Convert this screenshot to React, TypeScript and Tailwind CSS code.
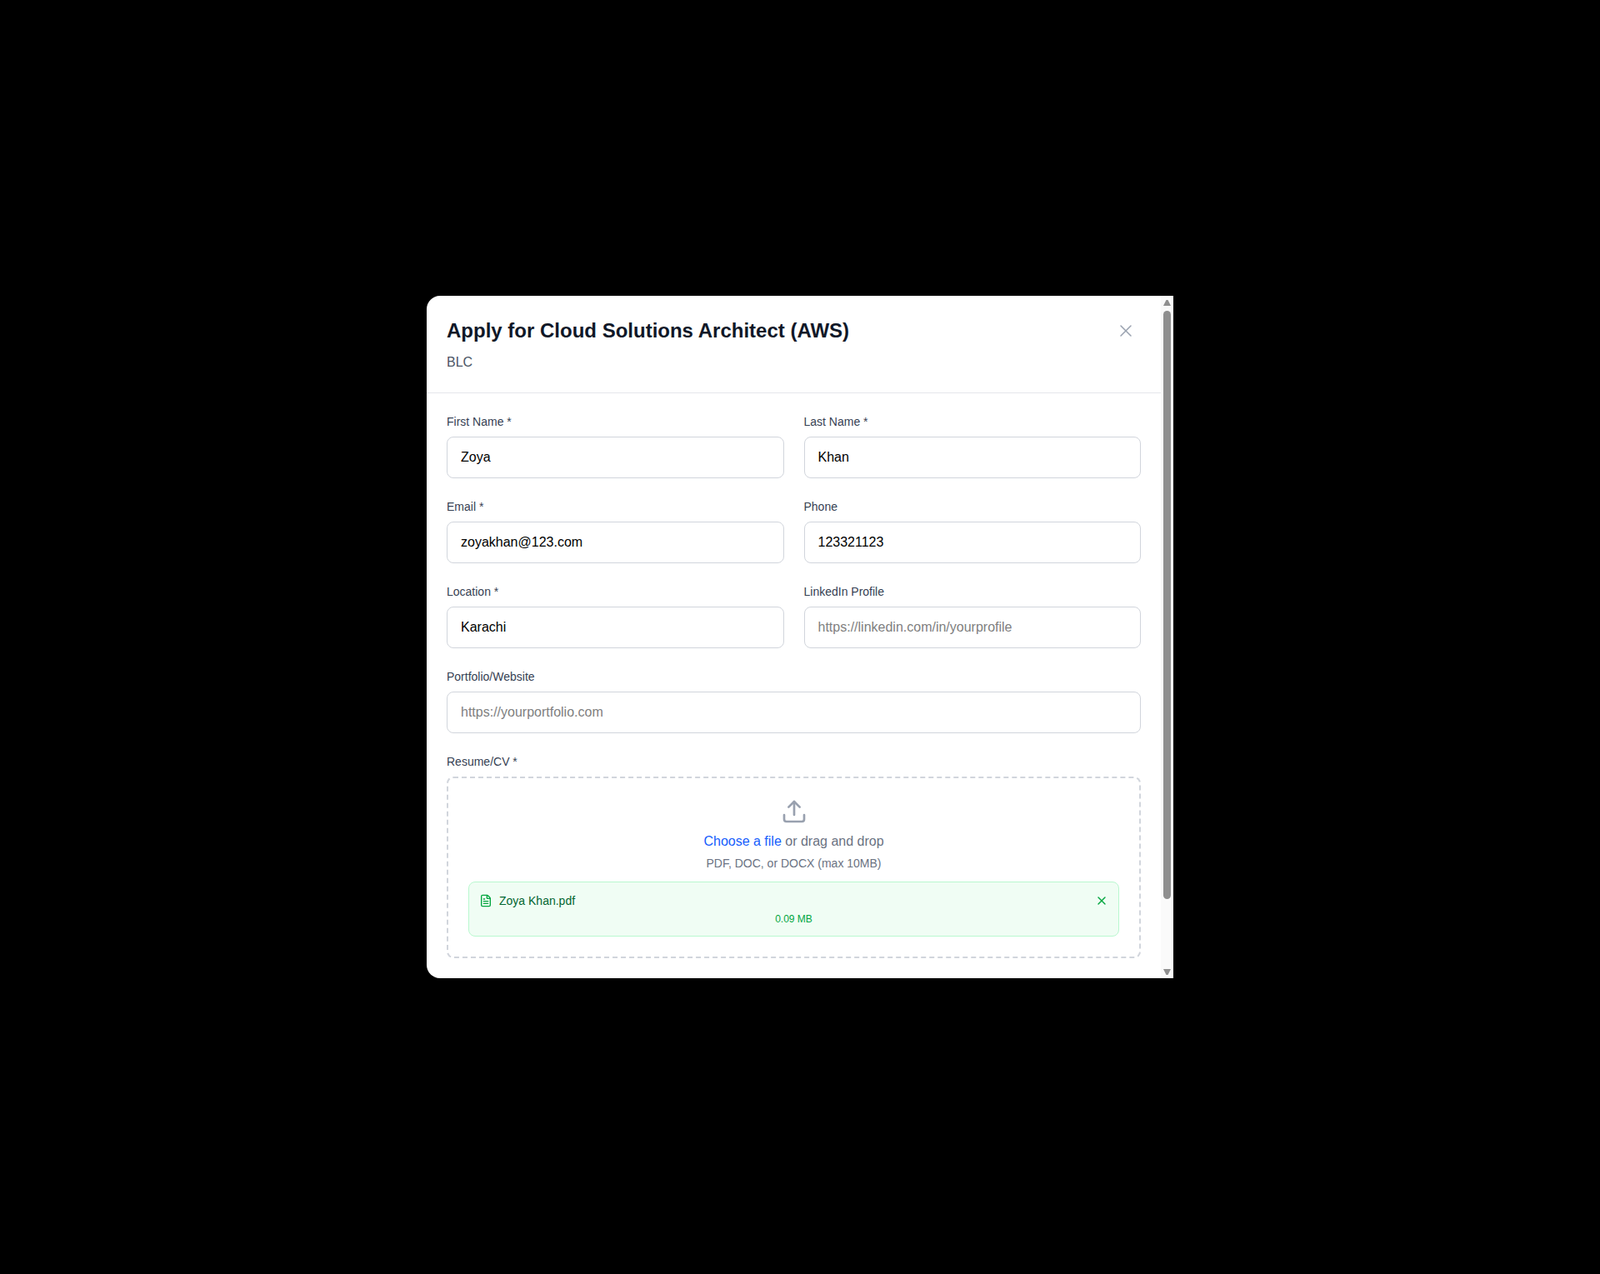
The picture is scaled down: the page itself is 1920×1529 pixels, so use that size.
import { Upload, X, FileText } from "lucide-react";

interface FieldProps {
  label: string;
  value?: string;
  placeholder?: string;
  type?: string;
}

function Field({ label, value, placeholder, type = "text" }: FieldProps) {
  return (
    <div>
      <label className="block text-sm font-medium text-gray-700 mb-2">{label}</label>
      <input
        type={type}
        defaultValue={value}
        placeholder={placeholder}
        className="w-full px-4 py-3 border border-gray-300 rounded-lg text-base text-black placeholder:text-[#808080] outline-none"
      />
    </div>
  );
}

function Scrollbar() {
  return (
    <div className="w-[15px] shrink-0 bg-[#fafafa] flex flex-col items-center pt-[5px]">
      <svg width="9" height="7" viewBox="0 0 9 7" className="text-[#8f8f8f]">
        <path d="M3.5 0h2L9 7H0z" fill="currentColor" />
      </svg>
      <div className="mt-[6px] w-[9px] h-[706px] rounded-[5px] bg-[#8f8f8f]" />
      <svg width="9" height="7" viewBox="0 0 9 7" className="mt-[84px] text-[#8f8f8f]">
        <path d="M0 0h9L5.5 7h-2z" fill="currentColor" />
      </svg>
    </div>
  );
}

export default function App() {
  return (
    <div className="h-[1529px] bg-black flex items-center justify-center font-['Liberation_Sans',Arial,sans-serif]">
      <div className="w-[896px] h-[819px] bg-white rounded-l-2xl overflow-hidden flex">
        <div className="flex-1 min-w-0">
          {/* Header */}
          <div className="p-6 border-b border-gray-200">
            <div className="flex items-center justify-between">
              <h2 className="text-2xl font-bold text-gray-900">
                Apply for Cloud Solutions Architect (AWS)
              </h2>
              <button className="p-1.5 text-gray-400" aria-label="Close">
                <X className="w-6 h-6" strokeWidth={1.5} />
              </button>
            </div>
            <p className="mt-2 text-base text-gray-600">BLC</p>
          </div>

          {/* Form */}
          <form className="p-6 flex flex-col gap-6">
            <div className="grid grid-cols-2 gap-6">
              <Field label="First Name *" value="Zoya" />
              <Field label="Last Name *" value="Khan" />
              <Field label="Email *" value="zoyakhan@123.com" type="email" />
              <Field label="Phone" value="123321123" />
              <Field label="Location *" value="Karachi" />
              <Field label="LinkedIn Profile" placeholder="https://linkedin.com/in/yourprofile" />
            </div>

            <Field label="Portfolio/Website" placeholder="https://yourportfolio.com" />

            <div>
              <label className="block text-sm font-medium text-gray-700 mb-2">Resume/CV *</label>
              <div className="border-2 border-dashed border-gray-300 rounded-lg p-6 text-center">
                <Upload className="w-8 h-8 text-gray-400 mx-auto mb-2" />
                <p className="text-base text-gray-500">
                  <span className="text-blue-600">Choose a file</span> or drag and drop
                </p>
                <p className="mt-1 text-sm text-gray-500">PDF, DOC, or DOCX (max 10MB)</p>
                <div className="mt-3 p-3 bg-green-50 border border-green-200 rounded-lg">
                  <div className="flex items-center justify-between">
                    <div className="flex items-center gap-2">
                      <FileText className="w-4 h-4 text-green-600" />
                      <span className="text-sm text-green-800">Zoya Khan.pdf</span>
                    </div>
                    <button type="button" className="text-green-600" aria-label="Remove file">
                      <X className="w-4 h-4" />
                    </button>
                  </div>
                  <p className="mt-1 text-xs text-green-600">0.09 MB</p>
                </div>
              </div>
            </div>
          </form>
        </div>
        <Scrollbar />
      </div>
    </div>
  );
}
